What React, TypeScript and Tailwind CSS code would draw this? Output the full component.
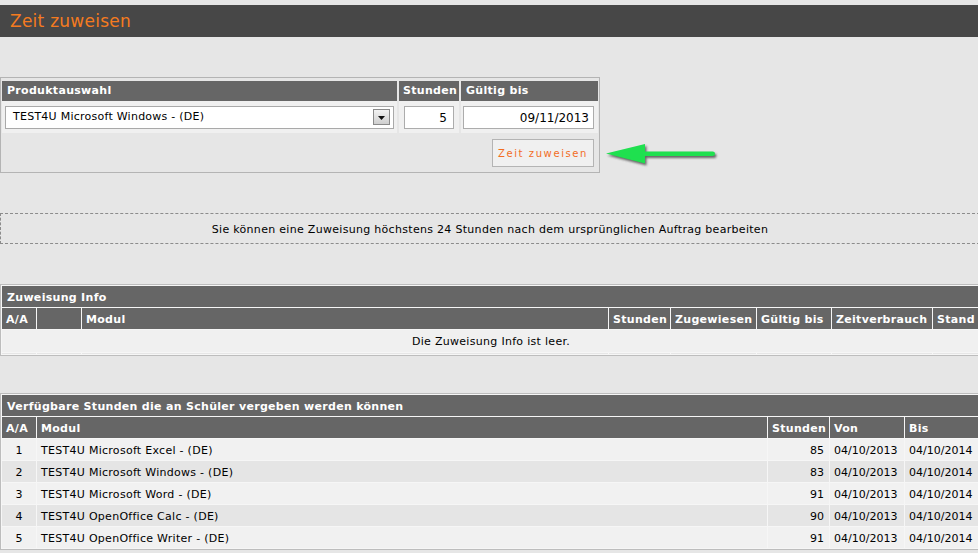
import React from 'react';

const produkte = [
  { nr: 1, modul: 'TEST4U Microsoft Excel - (DE)', stunden: 85 },
  { nr: 2, modul: 'TEST4U Microsoft Windows - (DE)', stunden: 83 },
  { nr: 3, modul: 'TEST4U Microsoft Word - (DE)', stunden: 91 },
  { nr: 4, modul: 'TEST4U OpenOffice Calc - (DE)', stunden: 90 },
  { nr: 5, modul: 'TEST4U OpenOffice Writer - (DE)', stunden: 91 },
];

function GreenArrow() {
  return (
    <svg width="118" height="30" viewBox="0 0 118 30" className="self-end mb-[3px] ml-[4px]">
      <defs>
        <filter id="blur" x="-10%" y="-30%" width="120%" height="160%">
          <feGaussianBlur stdDeviation="0.9" />
        </filter>
      </defs>
      <g transform="translate(1.5,2)" fill="#3a3a3a" opacity="0.75" filter="url(#blur)">
        <polygon points="2,13.5 41,4 41,23.5" />
        <rect x="38" y="11.4" width="73" height="4.6" rx="2.3" />
      </g>
      <g fill="#1fe04f">
        <polygon points="2,13.5 41,4 41,23.5" />
        <rect x="38" y="11.4" width="73" height="4.6" rx="2.3" />
      </g>
    </svg>
  );
}

export default function App() {
  return (
    <div className="w-[978px] h-[553px] overflow-hidden bg-[#e6e6e6] font-['DejaVu_Sans',Verdana,sans-serif] text-[11px] text-black">
      <div className="h-[5px]" />
      <div className="h-[32px] bg-[#474747] pl-[10px] pt-[2px] flex items-center text-[17px] tracking-[0.25px] text-[#f47b20]">
        Zeit zuweisen
      </div>

      {/* Produktauswahl */}
      <div className="mt-[40px] flex">
        <div className="w-[600px] h-[96px] border border-[#b4b4b4] p-[1px] flex flex-col">
          <div className="flex gap-[2px] h-[22px] pt-[2px] text-white font-bold tracking-[0.3px]">
            <div className="w-[395px] bg-[#666666] pl-[5px] flex items-center">Produktauswahl</div>
            <div className="w-[60px] bg-[#666666] pl-[4px] flex items-center">Stunden</div>
            <div className="w-[137px] bg-[#666666] pl-[5px] flex items-center">Gültig bis</div>
          </div>
          <div className="flex gap-[2px] h-[32px]">
            <div className="w-[395px] bg-[#f0f0f0] flex items-center pl-[3px]">
              <div className="w-[389px] h-[23px] bg-white border border-[#a9a9a9] flex items-center justify-between pl-[7px] pr-[3px]">
                <span className="tracking-[0.25px] pt-[1px]">TEST4U Microsoft Windows - (DE)</span>
                <span className="w-[17px] h-[16px] border border-[#8a8a8a] bg-gradient-to-b from-[#f2f2f2] to-[#cfcfcf] flex items-center justify-center pt-[2px]">
                  <svg width="7" height="4" viewBox="0 0 7 4">
                    <polygon points="0,0 7,0 3.5,4" fill="#111" />
                  </svg>
                </span>
              </div>
            </div>
            <div className="w-[60px] bg-[#f0f0f0] flex items-center justify-center">
              <div className="w-[50px] h-[23px] bg-white border border-[#acacac] flex items-center justify-end pr-[6px] pt-[1px] text-[12px]">5</div>
            </div>
            <div className="w-[137px] bg-[#f0f0f0] flex items-center pl-[2px]">
              <div className="w-[131px] h-[23px] bg-white border border-[#acacac] flex items-center justify-end pr-[4px] pt-[1px] text-[12px]">09/11/2013</div>
            </div>
          </div>
          <div className="flex-1 flex justify-end items-start pt-[6px] pr-[4px]">
            <button className="w-[102px] h-[28px] bg-[#f0f0f0] border border-[#b4b4b4] pt-[1px] text-[10px] tracking-[1.6px] text-[#f26d1f] flex items-center justify-center">
              Zeit zuweisen
            </button>
          </div>
        </div>
        <GreenArrow />
      </div>

      {/* Hinweis */}
      <div className="mt-[40px] w-[980px] h-[31px] pt-[3px] border border-dashed border-[#8c8c8c] flex items-center justify-center tracking-[0.3px]">
        Sie können eine Zuweisung höchstens 24 Stunden nach dem ursprünglichen Auftrag bearbeiten
      </div>

      {/* Zuweisung Info */}
      <table className="mt-[40px] w-[982px] table-fixed border-separate border-spacing-[1px] border border-[#bdbdbd] bg-[#f6f6f6]">
        <colgroup>
          <col className="w-[34px]" />
          <col className="w-[44px]" />
          <col className="w-[526px]" />
          <col className="w-[61px]" />
          <col className="w-[85px]" />
          <col className="w-[74px]" />
          <col className="w-[100px]" />
          <col />
        </colgroup>
        <thead className="text-white font-bold tracking-[0.3px]">
          <tr className="h-[21px]">
            <th colSpan={8} className="bg-[#666666] text-left font-bold p-0 pt-[3px] pl-[5px]">Zuweisung Info</th>
          </tr>
          <tr className="h-[21px]">
            {['A/A', '', 'Modul', 'Stunden', 'Zugewiesen', 'Gültig bis', 'Zeitverbrauch', 'Stand'].map((h, i) => (
              <th key={i} className="bg-[#666666] text-left font-bold p-0 pt-[3px] pl-[4px] whitespace-nowrap overflow-hidden">{h}</th>
            ))}
          </tr>
        </thead>
        <tbody>
          <tr className="h-[22px]">
            <td colSpan={8} className="bg-[#f0f0f0] text-center p-0 pt-[3px] tracking-[0.3px]">Die Zuweisung Info ist leer.</td>
          </tr>
          <tr className="h-[1px]">
            {Array.from({ length: 8 }).map((_, i) => (
              <td key={i} className="bg-[#e6e6e6] p-0 h-[1px]" />
            ))}
          </tr>
        </tbody>
      </table>

      {/* Verfügbare Stunden */}
      <table className="mt-[37px] w-[981px] table-fixed border-separate border-spacing-[1px] border border-[#bdbdbd] bg-[#f6f6f6]">
        <colgroup>
          <col className="w-[34px]" />
          <col className="w-[730px]" />
          <col className="w-[61px]" />
          <col className="w-[74px]" />
          <col className="w-[74px]" />
        </colgroup>
        <thead className="text-white tracking-[0.3px]">
          <tr className="h-[21px]">
            <th colSpan={5} className="bg-[#666666] text-left font-bold p-0 pt-[3px] pl-[5px]">
              Verfügbare Stunden die an Schüler vergeben werden können
            </th>
          </tr>
          <tr className="h-[21px]">
            {['A/A', 'Modul', 'Stunden', 'Von', 'Bis'].map((h, i) => (
              <th key={i} className="bg-[#666666] text-left font-bold p-0 pt-[3px] pl-[4px] whitespace-nowrap">{h}</th>
            ))}
          </tr>
        </thead>
        <tbody>
          {produkte.map((p) => (
            <tr key={p.nr} className={p.nr % 2 === 0 ? 'h-[21px] bg-[#e5e5e5]' : 'h-[21px] bg-[#f1f1f1]'}>
              <td className="p-0 pt-[3px] text-center">{p.nr}</td>
              <td className="p-0 pt-[3px] pl-[4px] tracking-[0.28px]">{p.modul}</td>
              <td className="p-0 pt-[3px] pr-[5px] text-right">{p.stunden}</td>
              <td className="p-0 pt-[3px] pl-[4px] whitespace-nowrap">04/10/2013</td>
              <td className="p-0 pt-[3px] pl-[4px] whitespace-nowrap">04/10/2014</td>
            </tr>
          ))}
        </tbody>
      </table>
    </div>
  );
}
